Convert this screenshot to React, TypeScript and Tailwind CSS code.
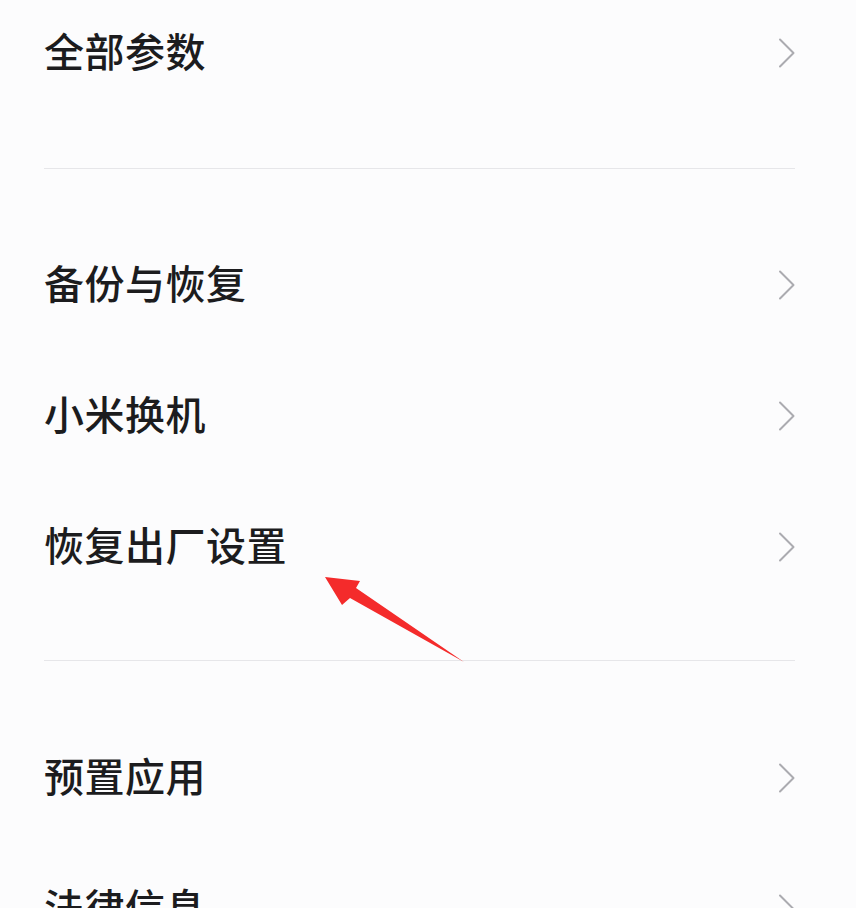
import { Fragment } from 'react';

type Row = { label: string };

const groups: Row[][] = [
  [{ label: '全部参数' }],
  [{ label: '备份与恢复' }, { label: '小米换机' }, { label: '恢复出厂设置' }],
  [{ label: '预置应用' }, { label: '法律信息' }],
];

function Chevron() {
  return (
    <svg width="18" height="30" viewBox="0 0 18 30" fill="none" className="shrink-0">
      <path d="M2 1.5 L15.5 15 L2 28.5" stroke="#ababb0" strokeWidth="2" strokeLinecap="round" strokeLinejoin="round" />
    </svg>
  );
}

function SettingRow({ label, first }: { label: string; first?: boolean }) {
  return (
    <div className={`flex items-center justify-between pl-[44px] pr-[60px] ${first ? 'h-[105px]' : 'h-[131px]'}`}>
      <span className="mb-[5px] text-[40px] leading-none font-medium text-[#1c1c1e] tracking-[0.5px]">{label}</span>
      <Chevron />
    </div>
  );
}

export default function App() {
  return (
    <div
      className="relative h-[908px] w-[856px] overflow-hidden bg-[#fcfcfd]"
      style={{ fontFamily: '"Noto Sans CJK SC", "Noto Sans", sans-serif' }}
    >
      {groups.map((rows, gi) => (
        <Fragment key={gi}>
          {gi === 1 && (
            <div className="pt-[63px] pb-[50px]">
              <div className="ml-[44px] mr-[61px] h-px bg-[#e6e6e9]" />
            </div>
          )}
          {gi === 2 && (
            <div className="pt-[48px] pb-[51px]">
              <div className="ml-[44px] mr-[61px] h-px bg-[#e6e6e9]" />
            </div>
          )}
          {rows.map((r, ri) => (
            <SettingRow key={r.label} label={r.label} first={gi === 0 && ri === 0} />
          ))}
        </Fragment>
      ))}

      {/* red annotation arrow */}
      <svg className="pointer-events-none absolute left-0 top-0" width="856" height="908" viewBox="0 0 856 908">
        <polygon
          points="325,577 360,581 356,588 464,662 350,598 342,605"
          fill="#f42b2b"
          strokeLinejoin="round"
        />
      </svg>
    </div>
  );
}
